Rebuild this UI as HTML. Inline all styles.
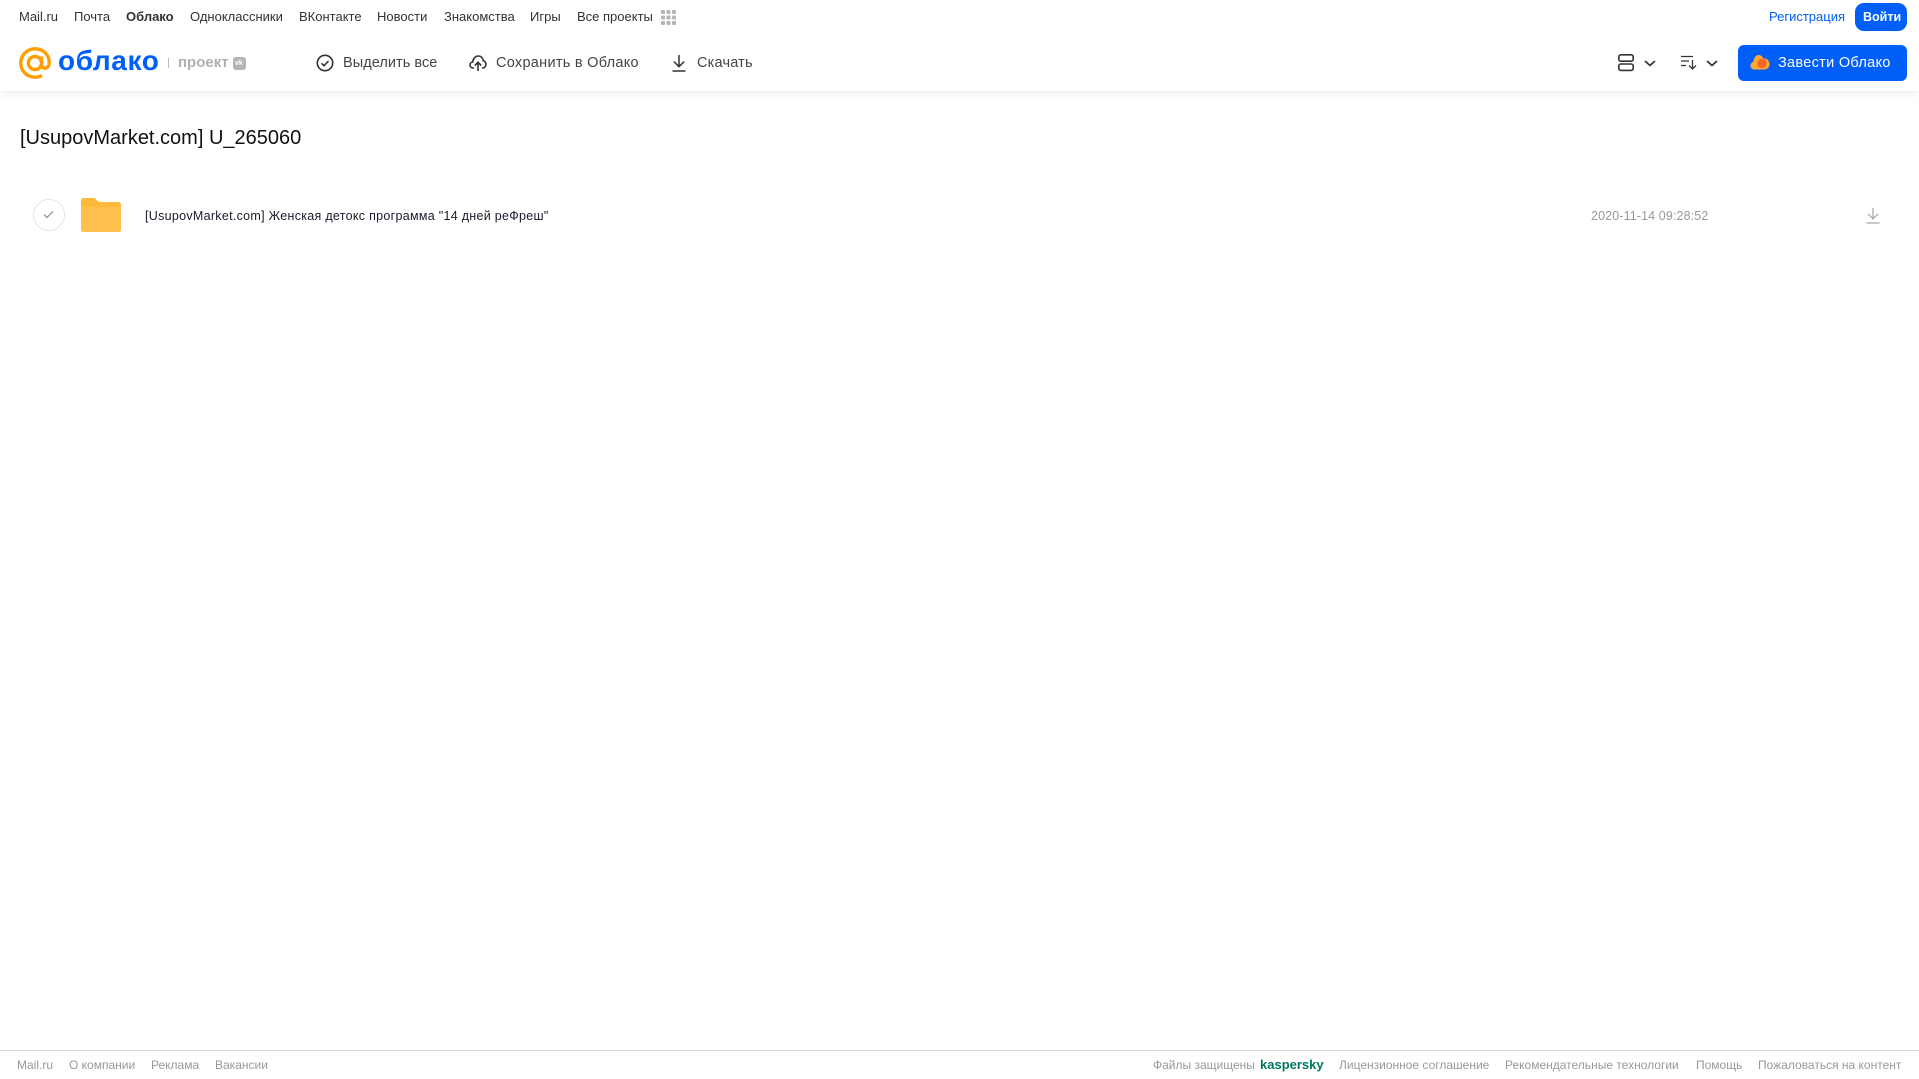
<!DOCTYPE html>
<html lang="ru"><head><meta charset="utf-8"><title>Облако</title>
<style>
html,body{margin:0;padding:0;background:#fff;width:1919px;height:1079px;overflow:hidden}
body{position:relative;font-family:"Liberation Sans","DejaVu Sans",sans-serif}
.t{position:absolute;white-space:nowrap;line-height:1}
svg{position:absolute;overflow:visible}
.n{font-size:13px;top:10px;color:#333}
.a{font-size:14.5px;top:56px;color:#444}
.f{font-size:12px;top:1059px;color:#999}
</style></head><body>
<div style="position:absolute;left:0;top:0;width:1919px;height:91px;background:#fff;box-shadow:0 2px 8px rgba(0,0,0,.08)"></div>

<span class="t n" style="left:19px">Mail.ru</span>
<span class="t n" style="left:74px">Почта</span>
<span class="t n" style="left:126px;font-weight:bold">Облако</span>
<span class="t n" style="left:190px">Одноклассники</span>
<span class="t n" style="left:299px">ВКонтакте</span>
<span class="t n" style="left:377px">Новости</span>
<span class="t n" style="left:444px">Знакомства</span>
<span class="t n" style="left:530px">Игры</span>
<span class="t n" style="left:577px">Все проекты</span>
<svg style="left:661px;top:10px" width="15" height="15" fill="#b5b5b5"><rect width="4" height="4" rx="1"/><rect x="5.500" width="4" height="4" rx="1"/><rect x="11" width="4" height="4" rx="1"/><rect y="5.500" width="4" height="4" rx="1"/><rect x="5.500" y="5.500" width="4" height="4" rx="1"/><rect x="11" y="5.500" width="4" height="4" rx="1"/><rect y="11" width="4" height="4" rx="1"/><rect x="5.500" y="11" width="4" height="4" rx="1"/><rect x="11" y="11" width="4" height="4" rx="1"/></svg>
<span class="t" style="left:1769px;top:10px;font-size:13px;color:#005ff9">Регистрация</span>
<div style="position:absolute;left:1855px;top:3px;width:52px;height:28px;border-radius:9px;background:#005ff9"></div>
<span class="t" style="left:1863px;top:11px;font-size:12.500px;font-weight:bold;color:#fff">Войти</span>

<svg style="left:19px;top:47px" width="32" height="32" viewBox="0 0 32 32" fill="none" stroke="#ff9e00" stroke-width="3.400"><circle cx="16" cy="16" r="6.600"/><path d="M22.600 9.500V18c0 4.600 7.400 4.600 7.600-2C30.400 7.500 24 1.800 16 1.800 8 1.800 1.800 8 1.800 16S8 30.200 16 30.200c2.800 0 5-.6 7-1.800"/></svg>
<span class="t" style="left:58px;top:47px;font-size:28px;font-weight:bold;color:#005ff9;letter-spacing:.6px">облако</span>
<div style="position:absolute;left:168px;top:58px;width:1px;height:10px;background:#bbb"></div>
<span class="t" style="left:178px;top:55px;font-size:15px;font-weight:bold;color:#b0b0b0">проект</span>
<div style="position:absolute;left:233px;top:57px;width:13px;height:13px;border-radius:3px;background:#b4b4b4"></div>
<span class="t" style="left:235px;top:60px;font-size:7px;font-weight:bold;color:#fff">vk</span>

<svg style="left:316px;top:54px" width="18" height="18" viewBox="0 0 18 18" fill="none" stroke="#333" stroke-width="1.600"><circle cx="9" cy="9" r="7.700"/><path d="M5.500 9.300l2.500 2.400 4.500-4.700"/></svg>
<span class="t a" style="left:343px;letter-spacing:.05px">Выделить все</span>
<svg style="left:469px;top:54px" width="18" height="18" viewBox="0 0 18 18" fill="none" stroke="#333" stroke-width="1.600"><path d="M5 14H4.200C2.300 14 1 12.600 1 11s1.200-2.800 2.700-3C4 4.800 6.300 2 9.300 2c2.700 0 4.800 2.100 5 4.800 1.600.3 2.700 2 2.700 3.500 0 2-1.500 3.700-3.500 3.700H13"/><path d="M9 17V8.500M5.800 11.500L9 8.300l3.200 3.200"/></svg>
<span class="t a" style="left:496px;letter-spacing:.28px">Сохранить в Облако</span>
<svg style="left:672px;top:54px" width="14" height="18" viewBox="0 0 14 18" fill="none" stroke="#333" stroke-width="1.500"><path d="M7 1v11.500M1.800 7.500L7 12.700l5.200-5.200M.5 17h13"/></svg>
<span class="t a" style="left:697px;letter-spacing:.2px">Скачать</span>

<svg style="left:1618px;top:54px" width="16" height="18" viewBox="0 0 16 18" fill="none" stroke="#333" stroke-width="1.600"><rect x=".8" y=".8" width="14.400" height="6.400" rx="2"/><rect x=".8" y="10" width="14.400" height="6.400" rx="2"/></svg>
<svg style="left:1644px;top:60px" width="12" height="7" viewBox="0 0 12 7" fill="none" stroke="#333" stroke-width="1.700"><path d="M1 1l5 4.500L11 1"/></svg>
<svg style="left:1681px;top:55px" width="16" height="15" viewBox="0 0 16 15" fill="none" stroke="#333" stroke-width="1.300"><path d="M0 1.500h12M0 6h8M0 10.500h5M11.500 5v8.500M8 10.500l3.500 3.500 3.500-3.500"/></svg>
<svg style="left:1706px;top:60px" width="12" height="7" viewBox="0 0 12 7" fill="none" stroke="#333" stroke-width="1.700"><path d="M1 1l5 4.500L11 1"/></svg>
<div style="position:absolute;left:1738px;top:45px;width:169px;height:36px;border-radius:6px;background:#005ff9"></div>
<svg style="left:1750px;top:54px" width="20" height="17" viewBox="0 0 20 17"><path d="M4.500 15.500C2 15.500.5 13.700.5 11.600c0-1.900 1.200-3.200 2.800-3.700C3.800 4 5.800 1 8.500 1c2.400 0 4 1.500 4.700 3.600 3.500-.5 6.300 2 6.300 5.500 0 3.200-2.400 5.400-5.500 5.400z" fill="#ffa930"/><circle cx="12" cy="9.500" r="4.800" fill="#f4672a"/></svg>
<span class="t" style="left:1778px;top:56px;font-size:14.500px;color:#fff;letter-spacing:.3px">Завести Облако</span>

<span class="t" style="left:20px;top:128px;font-size:20px;color:#111">[UsupovMarket.com] U_265060</span>

<div style="position:absolute;left:33px;top:199px;width:30px;height:30px;border:1px solid #e6e6e6;border-radius:50%"></div>
<svg style="left:43px;top:210px" width="11" height="9" viewBox="0 0 11 9" fill="none" stroke="#999" stroke-width="1.300"><path d="M1 4.500l3 3 6-6"/></svg>
<svg style="left:81px;top:198px" width="40" height="34" viewBox="0 0 40 34"><path d="M3 0h9c2 0 3 1 4 2.500 .7 1 1.500 1.500 3 1.500h18c1.700 0 3 1.300 3 3v25c0 1.100-.9 2-2 2H2c-1.100 0-2-.9-2-2V3C0 1.300 1.300 0 3 0z" fill="#ffc04d"/><path d="M0 9h40v-2c0-1.700-1.300-3-3-3H19c-1.500 0-2.300-.5-3-1.500C15 1 14 0 12 0H3C1.300 0 0 1.300 0 3z" fill="#ffb93a"/></svg>
<span class="t" style="left:145px;top:210px;font-size:12.500px;color:#1a1a2a;letter-spacing:.29px">[UsupovMarket.com] Женская детокс программа "14 дней реФреш"</span>
<span class="t" style="left:1591px;top:210px;font-size:12.500px;color:#999;letter-spacing:.12px">2020-11-14 09:28:52</span>
<svg style="left:1866px;top:207px" width="14" height="17" viewBox="0 0 14 17" fill="none" stroke="#aaa" stroke-width="1.300"><path d="M7 1v10.500M2 6.800l5 5 5-5M.5 16h13"/></svg>

<div style="position:absolute;left:0;top:1050px;width:1919px;height:1px;background:#d8d8d8"></div>
<span class="t f" style="left:17px">Mail.ru</span>
<span class="t f" style="left:69px">О компании</span>
<span class="t f" style="left:151px">Реклама</span>
<span class="t f" style="left:215px">Вакансии</span>
<span class="t f" style="left:1153px">Файлы защищены</span>
<span class="t" style="left:1260px;top:1058px;font-size:13px;font-weight:bold;color:#00775f">kaspersky</span>
<span class="t f" style="left:1339px">Лицензионное соглашение</span>
<span class="t f" style="left:1505px">Рекомендательные технологии</span>
<span class="t f" style="left:1696px">Помощь</span>
<span class="t f" style="left:1758px">Пожаловаться на контент</span>
</body></html>
